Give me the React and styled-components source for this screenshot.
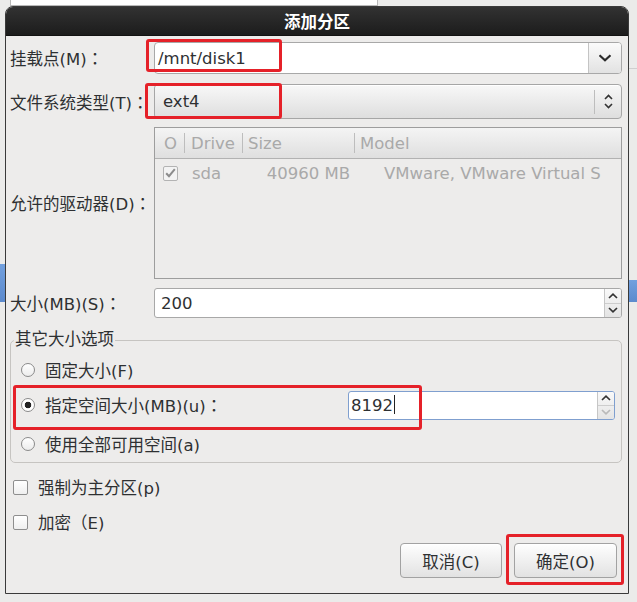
import styled, { createGlobalStyle } from "styled-components"

const Global = createGlobalStyle`
    *, *::before, *::after { box-sizing: border-box; }
    html, body { margin: 0; padding: 0; }
    body {
        background: #ebebea;
        font-family: "DejaVu Sans", "Noto Sans CJK SC", sans-serif;
        font-size: 16.5px;
        color: #2e3032;
    }
`

const Screen = styled.div`
    width: 637px;
    height: 602px;
    padding: 6px 0 0 5px;
    overflow: hidden;
    background:
        linear-gradient(#fff, #fff) 11px 0 / 366px 5px no-repeat,
        linear-gradient(#b9b9b9, #b9b9b9) 10px 0 / 368px 6px no-repeat,
        linear-gradient(#72a0de, #5c8acd) 0 264px / 6px 38px no-repeat,
        linear-gradient(#72a0de, #5c8acd) 628px 280px / 9px 22px no-repeat,
        linear-gradient(#cfcfcf, #cfcfcf) 628px 68px / 9px 1px no-repeat,
        #ebebea;
`

const Dialog = styled.div`
    width: 624px;
    height: 588px;
    display: flex;
    flex-direction: column;
    background: #edeceb;
    border: 1px solid #3a3a3a;
    border-radius: 8px 8px 0 0;
    overflow: hidden;
`

const TitleBar = styled.div`
    height: 29px;
    flex: none;
    display: flex;
    align-items: center;
    justify-content: center;
    background: linear-gradient(#323232, #1c1c1c);
    border-bottom: 1px solid #121212;
    color: #fff;
    font-weight: bold;
`

const Body = styled.div`
    flex: 1;
    display: flex;
    flex-direction: column;
    padding: 6px 6px 0 4px;
`

const FormRow = styled.div`
    display: grid;
    grid-template-columns: 144px 1fr;
    align-items: center;
    margin-top: ${p => p.$gap || 0}px;
`

const Label = styled.div`
    white-space: nowrap;
`

// full-width colon centred in its cell, as the GTK font draws it
const Colon = styled.span`
    font-family: "Noto Sans CJK TC", sans-serif;
`

const Field = styled.div`
    position: relative;
`

const Mark = styled.div`
    position: absolute;
    left: ${p => p.$x}px;
    top: ${p => p.$y}px;
    width: ${p => p.$w}px;
    height: ${p => p.$h}px;
    border: 3px solid #e52129;
    border-radius: 3px;
    pointer-events: none;
`

const ComboEntry = styled.div`
    height: 32px;
    display: flex;
    border: 1px solid #a8a8a8;
    border-radius: 4px;
    background: #fff;
    overflow: hidden;
`

const EntryText = styled.div`
    flex: 1;
    display: flex;
    align-items: center;
    padding-left: ${p => p.$pad ?? 3}px;
`

const DropButton = styled.div`
    width: 33px;
    display: flex;
    align-items: center;
    justify-content: center;
    border-left: 1px solid #c4c4c4;
    background: linear-gradient(#fbfbfb, #e2e2e2);
`

const ComboBox = styled.div`
    height: 35px;
    display: flex;
    align-items: center;
    padding-left: 8px;
    border: 1px solid #a6a6a6;
    border-radius: 4px;
    background: linear-gradient(#f8f8f8, #dedede);
    box-shadow: inset 0 1px #fff;
`

const ComboValue = styled.div`
    flex: 1;
`

const ComboArrows = styled.div`
    width: 27px;
    height: 24px;
    display: flex;
    align-items: center;
    justify-content: center;
    border-left: 1px solid #bdbdbd;
`

const TreeView = styled.div`
    height: 152px;
    display: flex;
    flex-direction: column;
    border: 1px solid #9d9d9d;
    background: #edeceb;
    color: #a9a9a9;
`

const TreeHeader = styled.div`
    height: 31px;
    display: grid;
    grid-template-columns: 29px 58px 112px 1fr;
    border-bottom: 1px solid #b2b2b2;
    background: linear-gradient(#f4f4f4, #dfdfdf);
`

const HeadCell = styled.div`
    display: flex;
    align-items: center;
    padding-left: ${p => p.$pad}px;
    background: ${p => p.$sep
        ? "linear-gradient(#bdbdbd, #bdbdbd) left center / 1px 20px no-repeat"
        : "none"};
`

const TreeRow = styled.div`
    height: 28px;
    display: grid;
    grid-template-columns: 29px 58px 112px 1fr;
    align-items: center;
`

const Cell = styled.div`
    padding-left: ${p => p.$pad || 0}px;
    padding-right: ${p => p.$right || 0}px;
    text-align: ${p => p.$align || "left"};
    white-space: nowrap;
    overflow: hidden;
`

const ListCheck = styled.span`
    width: 15px;
    height: 15px;
    margin-left: 8px;
    display: flex;
    align-items: center;
    justify-content: center;
    border: 1px solid #b3b3b3;
    border-radius: 2px;
    background: #f3f3f3;
`

const SpinEntry = styled.div`
    height: ${p => p.$h || 30}px;
    display: flex;
    border: 1px solid ${p => p.$focus ? "#7f9fcf" : "#a8a8a8"};
    border-radius: 3px;
    background: #fff;
    overflow: hidden;
`

const SpinButtons = styled.div`
    width: 17px;
    display: flex;
    flex-direction: column;
    border-left: 1px solid #c6c6c6;
    background: linear-gradient(#f9f9f9, #e4e4e4);
`

const SpinHalf = styled.div`
    flex: 1;
    display: flex;
    align-items: center;
    justify-content: center;
    & + & { border-top: 1px solid #cdcdcd; }
`

const Caret = styled.span`
    display: inline-block;
    width: 1px;
    height: 19px;
    margin-left: 1px;
    vertical-align: -3px;
    background: #222;
`

const Group = styled.fieldset`
    margin: 12px 0 0;
    padding: 7px 6px 5px 10px;
    border: 1px solid #c6c4c1;
    border-radius: 5px;
    min-width: 0;
`

const Legend = styled.legend`
    margin-left: -7px;
    padding: 0 1px;
    line-height: 20px;
`

const RadioRow = styled.div`
    position: relative;
    height: ${p => p.$h}px;
    margin-top: ${p => p.$gap || 0}px;
    display: flex;
    align-items: center;
    gap: 10px;
`

const Radio = styled.span`
    display: inline-block;
    width: 14px;
    height: 14px;
    flex: none;
    border-radius: 50%;
    border: 1px solid #8a8a8a;
    background: ${p => p.$on
        ? "radial-gradient(circle, #222 0 3px, #fff 3.6px)"
        : "linear-gradient(#ffffff, #ececec)"};
`

const RadioText = styled.span`
    flex: 1;
    white-space: nowrap;
`

const SizeSpin = styled.div`
    width: 267px;
`

const CheckRow = styled.div`
    height: 24px;
    margin-top: ${p => p.$gap}px;
    padding-left: 3px;
    display: flex;
    align-items: center;
    gap: 10px;
`

const CheckBox = styled.span`
    width: 15px;
    height: 15px;
    border: 1px solid #8e8e8e;
    border-radius: 2px;
    background: linear-gradient(#ffffff, #efefef);
`

const ButtonBar = styled.div`
    margin-top: 9px;
    padding-right: 5px;
    display: flex;
    justify-content: flex-end;
    gap: 12px;
`

const ButtonWrap = styled.div`
    position: relative;
`

const Button = styled.button`
    width: ${p => p.$w}px;
    height: 35px;
    padding: 0;
    font: inherit;
    color: #2e3032;
    border: 1px solid #a2a2a2;
    border-radius: 4px;
    background: linear-gradient(#fefefe, #e2e2e2);
    box-shadow: inset 0 1px #fff;
`

function ChevronDown() {
    return (
        <svg width="14" height="8" viewBox="0 0 14 8">
            <path d="M1.5 1.2 L7 6.2 L12.5 1.2" fill="none" stroke="#2b2b2b" strokeWidth="2.2" />
        </svg>
    )
}

function UpDown() {
    return (
        <svg width="9" height="15" viewBox="0 0 9 15">
            <path d="M1 5 L4.5 1.5 L8 5 M1 10 L4.5 13.5 L8 10" fill="none" stroke="#333" strokeWidth="1.6" />
        </svg>
    )
}

function Arrow({ up, color = "#333" }) {
    return (
        <svg width="10" height="6" viewBox="0 0 10 6">
            <path d={up ? "M1 5 L5 1.2 L9 5" : "M1 1 L5 4.8 L9 1"} fill="none" stroke={color} strokeWidth="1.7" />
        </svg>
    )
}

function Spin({ value, focus, h, down, pad = 6 }) {
    return (
        <SpinEntry $focus={focus} $h={h}>
            <EntryText $pad={pad}>{value}</EntryText>
            <SpinButtons>
                <SpinHalf><Arrow up /></SpinHalf>
                <SpinHalf><Arrow color={down} /></SpinHalf>
            </SpinButtons>
        </SpinEntry>
    )
}

export default function App() {
    return (
        <Screen>
            <Global />
            <Dialog>
                <TitleBar>添加分区</TitleBar>
                <Body>
                    <FormRow>
                        <Label>挂载点(M)<Colon>：</Colon></Label>
                        <Field>
                            <ComboEntry>
                                <EntryText>/mnt/disk1</EntryText>
                                <DropButton><ChevronDown /></DropButton>
                            </ComboEntry>
                            <Mark $x={-8} $y={-3} $w={136} $h={33} />
                        </Field>
                    </FormRow>

                    <FormRow $gap={10}>
                        <Label>文件系统类型(T)<Colon>：</Colon></Label>
                        <Field>
                            <ComboBox>
                                <ComboValue>ext4</ComboValue>
                                <ComboArrows><UpDown /></ComboArrows>
                            </ComboBox>
                            <Mark $x={-9} $y={-1} $w={137} $h={36} />
                        </Field>
                    </FormRow>

                    <FormRow $gap={8}>
                        <Label>允许的驱动器(D)<Colon>：</Colon></Label>
                        <TreeView>
                            <TreeHeader>
                                <HeadCell $pad={9}>O</HeadCell>
                                <HeadCell $pad={7} $sep>Drive</HeadCell>
                                <HeadCell $pad={6} $sep>Size</HeadCell>
                                <HeadCell $pad={6} $sep>Model</HeadCell>
                            </TreeHeader>
                            <TreeRow>
                                <ListCheck>
                                    <svg width="11" height="10" viewBox="0 0 11 10">
                                        <path d="M1.2 5.2 L4 8.2 L9.8 1.2" fill="none" stroke="#8c8c8c" strokeWidth="2" />
                                    </svg>
                                </ListCheck>
                                <Cell $pad={8}>sda</Cell>
                                <Cell $align="right" $right={4}>40960 MB</Cell>
                                <Cell $pad={30}>VMware, VMware Virtual S</Cell>
                            </TreeRow>
                        </TreeView>
                    </FormRow>

                    <FormRow $gap={9}>
                        <Label>大小(MB)(S)<Colon>：</Colon></Label>
                        <Field>
                            <Spin value="200" />
                        </Field>
                    </FormRow>

                    <Group>
                        <Legend>其它大小选项</Legend>
                        <RadioRow $h={26}>
                            <Radio />
                            <RadioText>固定大小(F)</RadioText>
                        </RadioRow>
                        <RadioRow $h={30} $gap={7}>
                            <Radio $on />
                            <RadioText>指定空间大小(MB)(u)<Colon>：</Colon></RadioText>
                            <SizeSpin>
                                <Spin
                                    focus
                                    h={29}
                                    pad={2}
                                    down="#b9b9b9"
                                    value={<span>8192<Caret /></span>}
                                />
                            </SizeSpin>
                            <Mark $x={-8} $y={-5} $w={409} $h={45} />
                        </RadioRow>
                        <RadioRow $h={26} $gap={11}>
                            <Radio />
                            <RadioText>使用全部可用空间(a)</RadioText>
                        </RadioRow>
                    </Group>

                    <CheckRow $gap={12}>
                        <CheckBox />
                        <span>强制为主分区(p)</span>
                    </CheckRow>
                    <CheckRow $gap={11}>
                        <CheckBox />
                        <span>加密（E)</span>
                    </CheckRow>

                    <ButtonBar>
                        <Button $w={102}>取消(C)</Button>
                        <ButtonWrap>
                            <Button $w={103}>确定(O)</Button>
                            <Mark $x={-8} $y={-9} $w={118} $h={51} />
                        </ButtonWrap>
                    </ButtonBar>
                </Body>
            </Dialog>
        </Screen>
    )
}
